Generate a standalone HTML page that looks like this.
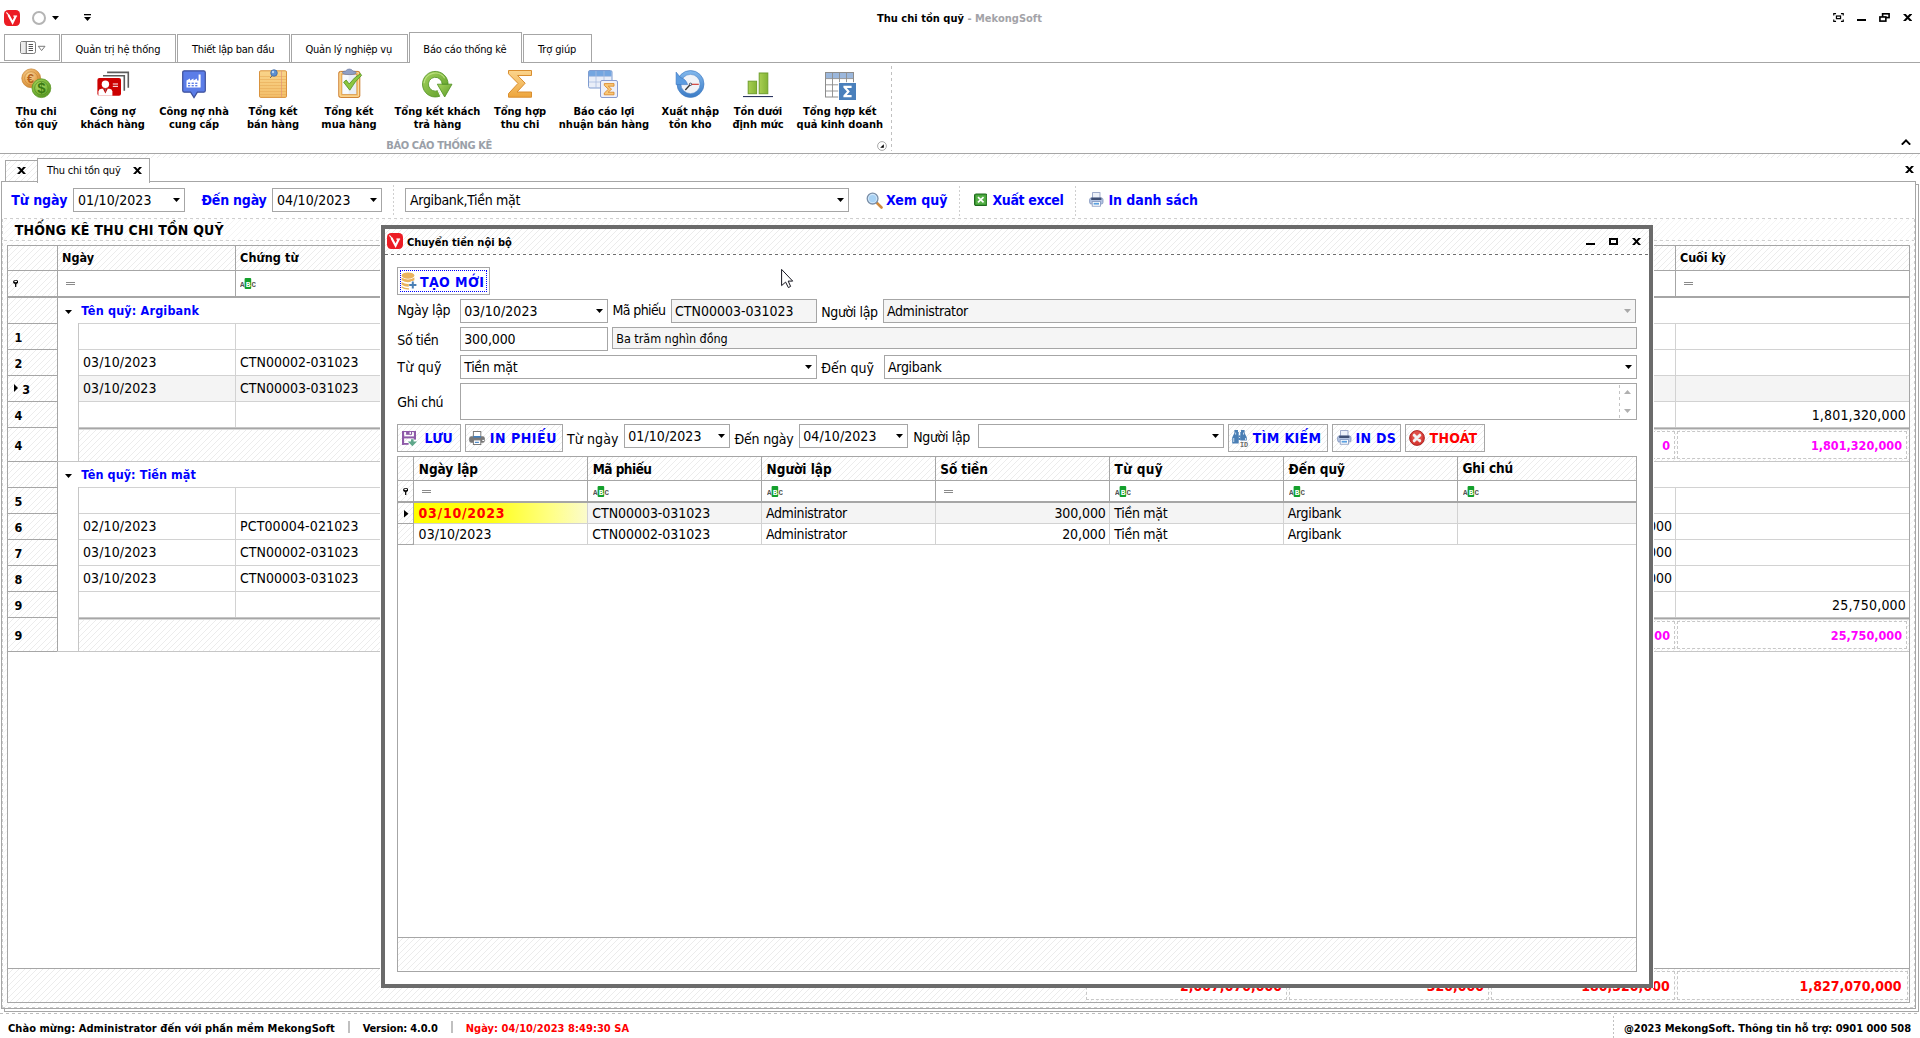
<!DOCTYPE html>
<html lang="vi"><head><meta charset="utf-8"><title>Thu chi tồn quỹ - MekongSoft</title>
<style>
html,body{margin:0;padding:0;background:#fff}
#r{position:relative;width:1920px;height:1038px;overflow:hidden;background:#fff;font-family:"DejaVu Sans Condensed","Liberation Sans",sans-serif}
#r div,#r svg,#r span{position:absolute;box-sizing:content-box}
#r span.t{white-space:nowrap}
#r span.t span{position:static}
.h{background:repeating-linear-gradient(135deg,#fff 0,#fff 3.45px,#ececec 3.45px,#ececec 4.2426px)}
.h3{background:repeating-linear-gradient(135deg,#fff 0,#fff 1.5px,#e2e2e2 1.5px,#e2e2e2 2.1213px)}
.h2{background:repeating-linear-gradient(135deg,#fff 0,#fff 3.45px,#f4f4f4 3.45px,#f4f4f4 4.2426px)}
</style></head><body><div id="r">
<svg style="left:4px;top:10px" width="16" height="16" viewBox="0 0 16 16"><rect x="0" y="0" width="16" height="16" rx="4.2" fill="#ec1c24"/><path d="M4.5 4.9L8.6 12.6L11.7 6.2" fill="none" stroke="#fff" stroke-width="2.1" stroke-linejoin="miter"/><path d="M9.4 6.1H13.1" stroke="#fff" stroke-width="1.3"/><path d="M2.4 2.3L5.2 5.6" stroke="#fff" stroke-width="1.1"/></svg>
<div style="left:32px;top:11px;width:10px;height:10px;border:2px solid #b4b4b4;border-radius:50%"></div>
<svg style="left:52px;top:16px" width="7" height="4"><path d="M0 0H7L3.5 4Z" fill="#000"/></svg>
<svg style="left:84px;top:14px" width="7" height="7"><rect x="0" y="0" width="7" height="1.3" fill="#000"/><path d="M0 3H7L3.5 7Z" fill="#000"/></svg>
<span class="t" style="top:13px;font-size:11px;line-height:11px;color:#000;font-weight:bold;left:877px;letter-spacing:0.02px;">Thu chi tồn quỹ<span style="color:#a3a3a8"> - MekongSoft</span></span>
<svg style="left:1833px;top:13px" width="11" height="9" viewBox="0 0 13 11" fill="none" stroke="#000" stroke-width="1.4"><path d="M0.7 3V0.7H3.5M9.5 0.7H12.3V3M12.3 8V10.3H9.5M3.5 10.3H0.7V8"/><rect x="4" y="3.7" width="5" height="3.2" stroke-width="1.5"/></svg>
<div style="left:1857px;top:19px;width:9px;height:2px;background:#000"></div>
<svg style="left:1879px;top:13px" width="11" height="9" viewBox="0 0 12 10" fill="none" stroke="#000" stroke-width="1.8"><rect x="3.9" y="0.9" width="7.2" height="4.2"/><rect x="0.9" y="4.4" width="6.6" height="4.6" fill="#fff"/></svg>
<svg style="left:1903px;top:14px" width="9.4" height="7" viewBox="0 0 9.4 7"><path d="M0 0H2.8L9.4 7H6.6ZM6.6 0H9.4L2.8 7H0Z" fill="#000"/></svg>
<div style="left:0px;top:62px;width:1920px;height:1px;background:#a6a6a6"></div>
<div style="left:4px;top:34px;width:54px;height:25px;border:1px solid #a6a6a6;background:#fff"></div>
<div style="left:61px;top:34px;width:113px;height:27px;border:1px solid #a6a6a6;border-bottom:none;background:#fff;"></div>
<span class="t" style="top:44px;font-size:11px;line-height:11px;color:#000;left:75.5px;letter-spacing:-0.17px;">Quản trị hệ thống</span>
<div style="left:177px;top:34px;width:111px;height:27px;border:1px solid #a6a6a6;border-bottom:none;background:#fff;"></div>
<span class="t" style="top:44px;font-size:11px;line-height:11px;color:#000;left:192px;letter-spacing:-0.27px;">Thiết lập ban đầu</span>
<div style="left:291px;top:34px;width:115px;height:27px;border:1px solid #a6a6a6;border-bottom:none;background:#fff;"></div>
<span class="t" style="top:44px;font-size:11px;line-height:11px;color:#000;left:305.5px;letter-spacing:-0.24px;">Quản lý nghiệp vụ</span>
<div style="left:409px;top:32px;width:111px;height:30px;border:1px solid #a6a6a6;border-bottom:none;background:#fff;"></div>
<span class="t" style="top:44px;font-size:11px;line-height:11px;color:#000;left:423.3px;letter-spacing:-0.19px;">Báo cáo thống kê</span>
<div style="left:523px;top:34px;width:67px;height:27px;border:1px solid #a6a6a6;border-bottom:none;background:#fff;"></div>
<span class="t" style="top:44px;font-size:11px;line-height:11px;color:#000;left:538px;letter-spacing:-0.13px;">Trợ giúp</span>
<svg style="left:20px;top:41px" width="26" height="13" viewBox="0 0 26 13" fill="none" stroke="#7a7a7a" stroke-width="1"><rect x="0.5" y="0.5" width="15" height="12" rx="1.8"/><rect x="1" y="1" width="5" height="11" fill="#ececec" stroke="none"/><path d="M6.3 0.5V12.5" stroke-width="1.2"/><path d="M8.6 3.5H13M8.6 5.5H13M8.6 7.5H13M8.6 9.5H13" stroke="#555"/><path d="M18.3 5.3H25L21.6 9.6Z"/></svg>
<span class="t" style="top:106px;font-size:11px;line-height:11px;color:#000;font-weight:bold;left:-163.6px;width:400px;text-align:center;">Thu chi</span>
<span class="t" style="top:119px;font-size:11px;line-height:11px;color:#000;font-weight:bold;left:-163.6px;width:400px;text-align:center;">tồn quỹ</span>
<span class="t" style="top:106px;font-size:11px;line-height:11px;color:#000;font-weight:bold;left:-87.3px;width:400px;text-align:center;">Công nợ</span>
<span class="t" style="top:119px;font-size:11px;line-height:11px;color:#000;font-weight:bold;left:-87.3px;width:400px;text-align:center;">khách hàng</span>
<span class="t" style="top:106px;font-size:11px;line-height:11px;color:#000;font-weight:bold;left:-6px;width:400px;text-align:center;">Công nợ nhà</span>
<span class="t" style="top:119px;font-size:11px;line-height:11px;color:#000;font-weight:bold;left:-6px;width:400px;text-align:center;">cung cấp</span>
<span class="t" style="top:106px;font-size:11px;line-height:11px;color:#000;font-weight:bold;left:73px;width:400px;text-align:center;">Tổng kết</span>
<span class="t" style="top:119px;font-size:11px;line-height:11px;color:#000;font-weight:bold;left:73px;width:400px;text-align:center;">bán hàng</span>
<span class="t" style="top:106px;font-size:11px;line-height:11px;color:#000;font-weight:bold;left:149px;width:400px;text-align:center;">Tổng kết</span>
<span class="t" style="top:119px;font-size:11px;line-height:11px;color:#000;font-weight:bold;left:149px;width:400px;text-align:center;">mua hàng</span>
<span class="t" style="top:106px;font-size:11px;line-height:11px;color:#000;font-weight:bold;left:237.5px;width:400px;text-align:center;">Tổng kết khách</span>
<span class="t" style="top:119px;font-size:11px;line-height:11px;color:#000;font-weight:bold;left:237.5px;width:400px;text-align:center;">trả hàng</span>
<span class="t" style="top:106px;font-size:11px;line-height:11px;color:#000;font-weight:bold;left:320px;width:400px;text-align:center;">Tổng hợp</span>
<span class="t" style="top:119px;font-size:11px;line-height:11px;color:#000;font-weight:bold;left:320px;width:400px;text-align:center;">thu chi</span>
<span class="t" style="top:106px;font-size:11px;line-height:11px;color:#000;font-weight:bold;left:404px;width:400px;text-align:center;">Báo cáo lợi</span>
<span class="t" style="top:119px;font-size:11px;line-height:11px;color:#000;font-weight:bold;left:404px;width:400px;text-align:center;">nhuận bán hàng</span>
<span class="t" style="top:106px;font-size:11px;line-height:11px;color:#000;font-weight:bold;left:490.29999999999995px;width:400px;text-align:center;">Xuất nhập</span>
<span class="t" style="top:119px;font-size:11px;line-height:11px;color:#000;font-weight:bold;left:490.29999999999995px;width:400px;text-align:center;">tồn kho</span>
<span class="t" style="top:106px;font-size:11px;line-height:11px;color:#000;font-weight:bold;left:558px;width:400px;text-align:center;">Tồn dưới</span>
<span class="t" style="top:119px;font-size:11px;line-height:11px;color:#000;font-weight:bold;left:558px;width:400px;text-align:center;">định mức</span>
<span class="t" style="top:106px;font-size:11px;line-height:11px;color:#000;font-weight:bold;left:639.8px;width:400px;text-align:center;">Tổng hợp kết</span>
<span class="t" style="top:119px;font-size:11px;line-height:11px;color:#000;font-weight:bold;left:639.8px;width:400px;text-align:center;">quả kinh doanh</span>
<span class="t" style="top:140px;font-size:11px;line-height:11px;color:#9aa0a8;font-weight:bold;left:386.3px;letter-spacing:-0.37px;">BÁO CÁO THỐNG KÊ</span>
<div style="left:891px;top:66px;width:1px;height:85px;background:repeating-linear-gradient(180deg,#c0c0c0 0,#c0c0c0 3px,transparent 3px,transparent 6px)"></div>
<svg style="left:877px;top:141px" width="10" height="10" viewBox="0 0 10 10"><circle cx="5" cy="5" r="4.4" fill="#fff" stroke="#a0a0a0" stroke-width="0.9"/><path d="M6.8 3.2V6.8H3.2Z" fill="#000"/></svg>
<svg style="left:1901px;top:139px" width="10" height="6" viewBox="0 0 10 6" fill="none" stroke="#000" stroke-width="2"><path d="M0.8 5.6L5 1.4L9.2 5.6"/></svg>
<div style="left:0px;top:153px;width:1920px;height:1px;background:#a6a6a6"></div>
<div class="h" style="left:0px;top:154px;width:1920px;height:4px;"></div>
<svg width="0" height="0" style="left:0;top:0"><defs>
<radialGradient id="gGold" cx="0.4" cy="0.35" r="0.7"><stop offset="0" stop-color="#f8d9a0"/><stop offset="0.6" stop-color="#e7a552"/><stop offset="1" stop-color="#c77f2c"/></radialGradient>
<radialGradient id="gGreen" cx="0.4" cy="0.35" r="0.7"><stop offset="0" stop-color="#b4dc6c"/><stop offset="0.6" stop-color="#7cb83a"/><stop offset="1" stop-color="#4f8f1f"/></radialGradient>
<linearGradient id="gNote" x1="0" y1="0" x2="0" y2="1"><stop offset="0" stop-color="#f9d48a"/><stop offset="1" stop-color="#f3bf6a"/></linearGradient>
<linearGradient id="gSig" x1="0" y1="0" x2="0" y2="1"><stop offset="0" stop-color="#fbd58e"/><stop offset="1" stop-color="#eda53c"/></linearGradient>
<linearGradient id="gGrn2" x1="0" y1="0" x2="1" y2="1"><stop offset="0" stop-color="#a6d45c"/><stop offset="1" stop-color="#5a9a28"/></linearGradient>
<linearGradient id="gBlu" x1="0" y1="0" x2="0" y2="1"><stop offset="0" stop-color="#7db4ea"/><stop offset="1" stop-color="#3f7fc8"/></linearGradient>
<linearGradient id="gBar" x1="0" y1="0" x2="1" y2="0"><stop offset="0" stop-color="#a9cf52"/><stop offset="1" stop-color="#84b436"/></linearGradient>
</defs></svg>
<svg style="left:20px;top:68px" width="32" height="32" viewBox="0 0 32 32"><circle cx="11.2" cy="10.3" r="9.4" fill="url(#gGold)" stroke="#c98a3a" stroke-width="0.8"/>
<circle cx="11.2" cy="10.3" r="6.6" fill="none" stroke="#c98a3a" stroke-width="0.7"/>
<text x="10.6" y="14.6" font-size="12.5" font-weight="bold" font-family="Liberation Sans,sans-serif" text-anchor="middle" fill="#b4621a">€</text>
<circle cx="21.4" cy="20.2" r="9.4" fill="url(#gGreen)" stroke="#5f9a2a" stroke-width="0.8"/>
<circle cx="21.4" cy="20.2" r="6.8" fill="none" stroke="#4f8a20" stroke-width="0.7"/>
<text x="21.4" y="25.4" font-size="15" font-weight="bold" font-family="Liberation Sans,sans-serif" text-anchor="middle" fill="#3a7a12">$</text></svg>
<svg style="left:96px;top:68px" width="34" height="32" viewBox="0 0 34 32"><path d="M11.1 4.4H32.3V19.8" fill="none" stroke="#5c5c5c" stroke-width="1.6"/>
<path d="M7 7.7H28.3V22.8" fill="none" stroke="#5c5c5c" stroke-width="1.6"/>
<rect x="1.4" y="10.1" width="23.6" height="17.7" rx="2" fill="#cc0000"/>
<circle cx="9.4" cy="16.3" r="3.7" fill="#fff"/>
<path d="M2.4 27.8V23.4Q2.6 21.2 5.5 20.8H13.3Q16.2 21.2 16.4 23.4V27.8Z" fill="#fff"/>
<path d="M6.9 20.6L9.4 25.4L11.9 20.6" fill="#cc0000"/>
<path d="M8.7 20.4H10.1L9.4 24.6Z" fill="#777"/>
<rect x="16.8" y="15.4" width="5.2" height="1.2" fill="#f6d0d0"/><rect x="16.8" y="17.8" width="5.2" height="1.2" fill="#f6d0d0"/></svg>
<svg style="left:181px;top:69px" width="26" height="31" viewBox="0 0 26 31"><path d="M3.3 1.8H22.7Q24.3 1.8 24.3 3.4V21.6Q24.3 23.2 22.7 23.2H16.4L13 28.6L9.6 23.2H3.3Q1.7 23.2 1.7 21.6V3.4Q1.7 1.8 3.3 1.8Z" fill="#5b7de8" stroke="#3c4f9a" stroke-width="1.2"/>
<path d="M5.5 18.6V11.6L9 9.6V11.6L12.5 9.6V11.6L16 9.6V11.6H17.6V5.6H19.6V18.6Z" fill="#fff"/>
<g fill="#5b7de8"><rect x="7" y="13.6" width="2.2" height="1.4"/><rect x="10.6" y="13.6" width="2.2" height="1.4"/><rect x="14.2" y="13.6" width="2.2" height="1.4"/><rect x="7" y="16" width="2.2" height="1.4"/><rect x="10.6" y="16" width="2.2" height="1.4"/><rect x="14.2" y="16" width="2.2" height="1.4"/></g></svg>
<svg style="left:258px;top:68px" width="31" height="32" viewBox="0 0 31 32"><rect x="1.5" y="2.8" width="27" height="26.6" rx="1.2" fill="url(#gNote)" stroke="#d9933e" stroke-width="1"/>
<g stroke="#e8ab58" stroke-width="0.6"><path d="M2 8.5H28M2 11.5H28M2 14.5H28M2 17.5H28M2 20.5H28M2 23.5H28M2 26.5H28"/></g>
<path d="M23.5 3V29" stroke="#e08d7a" stroke-width="0.6"/>
<path d="M14.5 7.5L12 10" stroke="#6a6a6a" stroke-width="1"/>
<circle cx="16" cy="5" r="3.3" fill="#5d8fd0" stroke="#2f5f9f" stroke-width="0.7"/><circle cx="15" cy="4" r="1.2" fill="#b8d4f2"/></svg>
<svg style="left:336.7px;top:68px" width="27" height="32" viewBox="0 0 27 32"><rect x="1.8" y="3.4" width="21" height="26" rx="1.6" fill="#f6bd62" stroke="#c9792a" stroke-width="1"/>
<rect x="3" y="4.6" width="18.6" height="23.6" rx="1" fill="none" stroke="#fbe0a8" stroke-width="1"/>
<rect x="5" y="6.2" width="14.8" height="20.2" fill="#e9eef6" stroke="#d08a3a" stroke-width="0.6"/>
<rect x="5.6" y="6.8" width="6" height="19" fill="#fafcff" opacity="0.8"/>
<path d="M5.4 4.6Q5.4 3.2 8.6 3Q10 1 12.3 1T16 3Q19.2 3.2 19.2 4.6Q19.2 6.6 12.3 6.6T5.4 4.6Z" fill="#8f9fc4" stroke="#5f6f9c" stroke-width="0.6"/>
<path d="M6.6 14.2L9.2 12L12.2 16Q17 9.4 23.4 5.6L24.6 7.4Q18 13 12.8 22.2Z" fill="#8cc63f" stroke="#4f8f1f" stroke-width="0.8" stroke-linejoin="round"/></svg>
<svg style="left:421px;top:70px" width="32" height="30" viewBox="0 0 32 30"><path d="M16.3 14.2H31L23.7 27Z" fill="url(#gGrn2)" stroke="#4e8f20" stroke-width="0.8" stroke-linejoin="round"/>
<path d="M27.10 14.20A12.8 12.8 0 1 0 19.51 25.89L17.11 20.50A6.9 6.9 0 1 1 21.20 14.20Z" fill="url(#gGrn2)" stroke="#4e8f20" stroke-width="0.8"/>
<path d="M16.91 20.10L20.11 27.09" stroke="#fff" stroke-width="1.1"/>
<path d="M3.10 13.20A11.200000000000001 11.200000000000001 0 0 1 23.70 8.20" fill="none" stroke="#c5e68c" stroke-width="1.2" opacity="0.8"/></svg>
<svg style="left:506px;top:69px" width="28" height="30" viewBox="0 0 28 30"><path d="M2.5 1.5H25.5V6.5H11.6L19.2 14.2L11 23H25.5V28.2H2.5V24.6L12 14.4L2.5 4.8Z" fill="url(#gSig)" stroke="#d98e30" stroke-width="1" stroke-linejoin="round"/></svg>
<svg style="left:587px;top:69px" width="32" height="30" viewBox="0 0 32 30"><rect x="1.5" y="1.5" width="23.5" height="17.5" rx="1.5" fill="#e9eef8" stroke="#7f9cd0" stroke-width="1"/>
<rect x="2" y="2" width="22.5" height="5.2" fill="#74a6e0"/>
<g stroke="#a9bde0" stroke-width="0.8"><path d="M9 2V19M17 2V19M2 7.4H25M2 13H25"/></g>
<rect x="13.5" y="11.5" width="17" height="17" rx="1.5" fill="#eef0fa" stroke="#8a9cd0" stroke-width="1"/>
<path d="M17.3 14.6H27V17.2H21.3L24.6 20.2L21.2 23.2H27V25.8H17.3V24L21.4 20.2L17.3 16.4Z" fill="#f9c878" stroke="#d98220" stroke-width="0.8" stroke-linejoin="round"/></svg>
<svg style="left:675px;top:70px" width="30" height="30" viewBox="0 0 30 30"><circle cx="15.5" cy="14" r="11.6" fill="#f0f3f8" stroke="url(#gBlu)" stroke-width="3.8"/>
<circle cx="15.5" cy="14" r="13.5" fill="none" stroke="#3a76c0" stroke-width="0.6"/>
<circle cx="15.5" cy="14" r="9.6" fill="none" stroke="#3a76c0" stroke-width="0.5"/>
<path d="M1.1 2.1V14.6H12.6Q11 9 5.5 7.5Z" fill="#5c9ce0" stroke="#3a76c0" stroke-width="0.6" stroke-linejoin="round"/>
<path d="M15.5 14.3H23.8" stroke="#d03028" stroke-width="1.1"/>
<path d="M15.5 14.3L10.3 20" stroke="#333" stroke-width="1.3"/>
<circle cx="15.5" cy="14.3" r="1.2" fill="#dfe9f5" stroke="#223" stroke-width="0.7"/></svg>
<svg style="left:742px;top:69px" width="32" height="30" viewBox="0 0 32 30"><rect x="6.2" y="12.2" width="8.4" height="12.5" fill="url(#gBar)" stroke="#6f9e2c" stroke-width="1"/>
<rect x="17.2" y="4" width="8.6" height="20.7" fill="url(#gBar)" stroke="#6f9e2c" stroke-width="1"/>
<rect x="1" y="27" width="30" height="1.1" fill="#2c3560"/></svg>
<svg style="left:824px;top:69px" width="33" height="32" viewBox="0 0 33 32"><rect x="1.5" y="3.5" width="28" height="24.5" fill="#fff" stroke="#8c8c8c" stroke-width="1"/>
<rect x="2" y="4" width="27" height="5.4" fill="#9bb7dc"/>
<g stroke="#8c8c8c" stroke-width="0.9"><path d="M8.5 3.5V28M15.5 3.5V28M22.5 3.5V28M1.5 9.6H29.5M1.5 15.8H29.5M1.5 22H29.5"/></g>
<rect x="14.2" y="13.2" width="18.6" height="18.6" fill="#fff"/><rect x="15" y="14" width="17" height="17" fill="#4a80bc"/>
<path d="M19.4 16.8H27.6V19H22.8L25.8 22.5L22.8 26H27.6V28.2H19.4V26.6L23 22.5L19.4 18.4Z" fill="#fff"/></svg>
<div style="left:4px;top:184px;width:1913px;height:826px;border:1px solid #a6a6a6;background:#fff"></div>
<div style="left:1px;top:181px;width:1913px;height:826px;border:1px solid #a6a6a6;background:#fff"></div>
<div class="h" style="left:5px;top:160px;width:31px;height:20px;border:1px solid #a6a6a6;border-bottom:none"></div>
<div style="left:37px;top:158px;width:111px;height:24px;border:1px solid #a6a6a6;border-bottom:none;background:#fff"></div>
<svg style="left:17px;top:167px" width="9" height="7" viewBox="0 0 9 7"><path d="M0 0H2.7L9 7H6.3ZM6.3 0H9L2.7 7H0Z" fill="#000"/></svg>
<svg style="left:133px;top:167px" width="9" height="7" viewBox="0 0 9 7"><path d="M0 0H2.7L9 7H6.3ZM6.3 0H9L2.7 7H0Z" fill="#000"/></svg>
<svg style="left:1905px;top:166px" width="9" height="7" viewBox="0 0 9 7"><path d="M0 0H2.7L9 7H6.3ZM6.3 0H9L2.7 7H0Z" fill="#000"/></svg>
<span class="t" style="top:165px;font-size:11px;line-height:11px;color:#000;left:47px;letter-spacing:-0.24px;">Thu chi tồn quỹ</span>
<div class="h2" style="left:2px;top:219px;width:1913px;height:788px;"></div>
<div style="left:2px;top:219px;width:1px;height:789px;background:repeating-linear-gradient(180deg,#cfcfcf 0,#cfcfcf 3px,transparent 3px,transparent 6px)"></div>
<div style="left:4px;top:218px;width:1910px;height:1px;background:repeating-linear-gradient(90deg,#cfcfcf 0,#cfcfcf 3px,transparent 3px,transparent 6px)"></div>
<div style="left:4px;top:240px;width:1910px;height:1px;background:repeating-linear-gradient(90deg,#cfcfcf 0,#cfcfcf 3px,transparent 3px,transparent 6px)"></div>
<div style="left:1914px;top:219px;width:1px;height:788px;background:repeating-linear-gradient(180deg,#cfcfcf 0,#cfcfcf 3px,transparent 3px,transparent 6px)"></div>
<div style="left:2px;top:1007px;width:1912px;height:1px;background:repeating-linear-gradient(90deg,#cfcfcf 0,#cfcfcf 3px,transparent 3px,transparent 6px)"></div>
<span class="t" style="top:193px;font-size:14px;line-height:14px;color:#0000ff;font-weight:bold;left:11.2px;letter-spacing:0.00px;">Từ ngày</span>
<div style="left:73px;top:188px;width:110px;height:22px;border:1px solid #a6a6a6;background:#fff"></div>
<span class="t" style="top:193px;font-size:14px;line-height:14px;color:#000;left:78px;letter-spacing:0.10px;">01/10/2023</span>
<svg style="left:173px;top:198.0px" width="7" height="4"><path d="M0 0H7L3.5 4Z" fill="#000"/></svg>
<span class="t" style="top:193px;font-size:14px;line-height:14px;color:#0000ff;font-weight:bold;left:201.5px;letter-spacing:-0.21px;">Đến ngày</span>
<div style="left:272px;top:188px;width:108px;height:22px;border:1px solid #a6a6a6;background:#fff"></div>
<span class="t" style="top:193px;font-size:14px;line-height:14px;color:#000;left:277px;letter-spacing:0.10px;">04/10/2023</span>
<svg style="left:370px;top:198.0px" width="7" height="4"><path d="M0 0H7L3.5 4Z" fill="#000"/></svg>
<div style="left:393px;top:185px;width:1px;height:30px;background:repeating-linear-gradient(180deg,#cfcfcf 0,#cfcfcf 2px,transparent 2px,transparent 4px)"></div>
<div style="left:405px;top:188px;width:442px;height:22px;border:1px solid #a6a6a6;background:#fff"></div>
<span class="t" style="top:193px;font-size:14px;line-height:14px;color:#000;left:410px;letter-spacing:-0.32px;">Argibank,Tiền mặt</span>
<svg style="left:837px;top:198.0px" width="7" height="4"><path d="M0 0H7L3.5 4Z" fill="#000"/></svg>
<svg style="left:866px;top:192px" width="17" height="17" viewBox="0 0 17 17"><path d="M10 10L15.5 15.5" stroke="#d08a3c" stroke-width="2.6" stroke-linecap="round"/><circle cx="6.6" cy="6.6" r="5.4" fill="#cfe6fa" stroke="#7a8fa8" stroke-width="1.3"/><circle cx="6.6" cy="6.6" r="3.6" fill="#a8d2f4"/></svg>
<span class="t" style="top:193px;font-size:14px;line-height:14px;color:#0000ff;font-weight:bold;left:886px;letter-spacing:-0.01px;">Xem quỹ</span>
<div style="left:959px;top:186px;width:1px;height:30px;background:repeating-linear-gradient(180deg,#cfcfcf 0,#cfcfcf 2px,transparent 2px,transparent 4px)"></div>
<svg style="left:973.5px;top:193px" width="13.5" height="13.5" viewBox="0 0 15 14"><rect x="0.6" y="0.6" width="13.8" height="12.8" rx="1.8" fill="#3f9c35" stroke="#1f6a1c" stroke-width="1.2"/><rect x="2.2" y="2.2" width="10.6" height="9.6" fill="#5fb84e" opacity="0.7"/><path d="M4.4 4.2L10.6 9.8M10.6 4.2L4.4 9.8" stroke="#fff" stroke-width="1.9"/></svg>
<span class="t" style="top:193px;font-size:14px;line-height:14px;color:#0000ff;font-weight:bold;left:992.5px;letter-spacing:-0.36px;">Xuất excel</span>
<div style="left:1075px;top:186px;width:1px;height:30px;background:repeating-linear-gradient(180deg,#cfcfcf 0,#cfcfcf 2px,transparent 2px,transparent 4px)"></div>
<svg style="left:1089px;top:192px" width="15.0" height="15.0" viewBox="0 0 15 15"><rect x="3.6" y="0.6" width="7.4" height="6" fill="#eef2fa" stroke="#8a9ac0" stroke-width="0.8"/><rect x="0.6" y="6" width="13.4" height="6" rx="1.6" fill="#b4c4e2" stroke="#7f93bd" stroke-width="0.8"/><rect x="2.2" y="5.6" width="10.2" height="2.4" fill="#3f4f74"/><rect x="3.2" y="9.6" width="8.2" height="4.6" fill="#fff" stroke="#7f93bd" stroke-width="0.8"/><rect x="4.6" y="10.8" width="5.4" height="1.8" fill="#5aa0e0"/></svg>
<span class="t" style="top:193px;font-size:14px;line-height:14px;color:#0000ff;font-weight:bold;left:1108.5px;letter-spacing:-0.07px;">In danh sách</span>
<span class="t" style="top:223px;font-size:14px;line-height:14px;color:#000;font-weight:bold;left:14.7px;letter-spacing:0.18px;">THỐNG KÊ THU CHI TỒN QUỸ</span>
<div style="left:7px;top:245px;width:1901px;height:756px;border:1px solid #a6a6a6;background:#fff"></div>
<div class="h" style="left:8px;top:246px;width:1901px;height:24px;"></div>
<div class="h" style="left:8px;top:271px;width:49px;height:380px;"></div>
<div style="left:8px;top:270px;width:1901px;height:1px;background:#a6a6a6"></div>
<div style="left:8px;top:296px;width:1901px;height:2px;background:#a6a6a6"></div>
<div style="left:57px;top:246px;width:1px;height:405px;background:#a6a6a6"></div>
<div style="left:235px;top:246px;width:1px;height:50px;background:#a6a6a6"></div>
<div style="left:700px;top:246px;width:1px;height:50px;background:#a6a6a6"></div>
<div style="left:1085px;top:246px;width:1px;height:50px;background:#a6a6a6"></div>
<div style="left:1288px;top:246px;width:1px;height:50px;background:#a6a6a6"></div>
<div style="left:1490px;top:246px;width:1px;height:50px;background:#a6a6a6"></div>
<div style="left:1675px;top:246px;width:1px;height:50px;background:#a6a6a6"></div>
<span class="t" style="top:252px;font-size:12.5px;line-height:12.5px;color:#000;font-weight:bold;left:62px;letter-spacing:0.00px;">Ngày</span>
<span class="t" style="top:252px;font-size:12.5px;line-height:12.5px;color:#000;font-weight:bold;left:240px;letter-spacing:0.14px;">Chứng từ</span>
<span class="t" style="top:252px;font-size:12.5px;line-height:12.5px;color:#000;font-weight:bold;left:1680px;letter-spacing:-0.12px;">Cuối kỳ</span>
<svg style="left:12.8px;top:280px" width="5.4" height="7.2" viewBox="0 0 5.4 7.2"><ellipse cx="2.7" cy="1.9" rx="2.7" ry="1.9" fill="#000"/><ellipse cx="2.7" cy="1.45" rx="1.45" ry="0.7" fill="#fff"/><path d="M1.2 3.2H4.2L3.3 4.4V7.2H2.1V4.4Z" fill="#000"/></svg>
<div style="left:66px;top:282px;width:9px;height:1px;background:#8a8a8a"></div><div style="left:66px;top:284px;width:9px;height:1px;background:#8a8a8a"></div>
<svg style="left:240px;top:278px" width="16" height="11" viewBox="0 0 16 11"><rect x="4.6" y="0" width="6.6" height="11" rx="1" fill="#14a02c"/><text x="0" y="8.6" font-size="7.5" font-weight="bold" font-family="Liberation Mono,monospace" fill="#555">A</text><text x="5.7" y="8.8" font-size="8" font-weight="bold" font-family="Liberation Mono,monospace" fill="#fff">B</text><text x="11.6" y="8.6" font-size="7.5" font-weight="bold" font-family="Liberation Mono,monospace" fill="#555">C</text></svg>
<div style="left:1684px;top:282px;width:9px;height:1px;background:#8a8a8a"></div><div style="left:1684px;top:284px;width:9px;height:1px;background:#8a8a8a"></div>
<div style="left:8px;top:323px;width:49px;height:1px;background:#a6a6a6"></div>
<div style="left:8px;top:349px;width:49px;height:1px;background:#a6a6a6"></div>
<div style="left:8px;top:375px;width:49px;height:1px;background:#a6a6a6"></div>
<div style="left:8px;top:401px;width:49px;height:1px;background:#a6a6a6"></div>
<div style="left:8px;top:427px;width:49px;height:1px;background:#a6a6a6"></div>
<div style="left:8px;top:461px;width:49px;height:1px;background:#a6a6a6"></div>
<div style="left:8px;top:487px;width:49px;height:1px;background:#a6a6a6"></div>
<div style="left:8px;top:513px;width:49px;height:1px;background:#a6a6a6"></div>
<div style="left:8px;top:539px;width:49px;height:1px;background:#a6a6a6"></div>
<div style="left:8px;top:565px;width:49px;height:1px;background:#a6a6a6"></div>
<div style="left:8px;top:591px;width:49px;height:1px;background:#a6a6a6"></div>
<div style="left:8px;top:617px;width:49px;height:1px;background:#a6a6a6"></div>
<div style="left:8px;top:651px;width:49px;height:1px;background:#a6a6a6"></div>
<svg style="left:65px;top:310px" width="7" height="4"><path d="M0 0H7L3.5 4Z" fill="#000"/></svg>
<span class="t" style="top:305px;font-size:12.5px;line-height:12.5px;color:#0000ff;font-weight:bold;left:81.3px;letter-spacing:0.17px;">Tên quỹ: Argibank</span>
<div style="left:78px;top:323px;width:1831px;height:1px;background:#d2d2d2"></div>
<div style="left:78px;top:323px;width:1px;height:138px;background:#c6c6c6"></div>
<div style="left:79px;top:349px;width:1830px;height:1px;background:#d2d2d2"></div>
<div style="left:79px;top:375px;width:1830px;height:1px;background:#d2d2d2"></div>
<div style="left:79px;top:401px;width:1830px;height:1px;background:#d2d2d2"></div>
<div style="left:235px;top:324px;width:1px;height:103px;background:#d2d2d2"></div>
<div style="left:700px;top:324px;width:1px;height:103px;background:#d2d2d2"></div>
<div style="left:1085px;top:324px;width:1px;height:103px;background:#d2d2d2"></div>
<div style="left:1288px;top:324px;width:1px;height:103px;background:#d2d2d2"></div>
<div style="left:1490px;top:324px;width:1px;height:103px;background:#d2d2d2"></div>
<div style="left:1675px;top:324px;width:1px;height:103px;background:#d2d2d2"></div>
<div style="left:79px;top:427px;width:1830px;height:1px;background:#c6c6c6"></div>
<div style="left:79px;top:428px;width:1830px;height:1px;background:#a6a6a6"></div>
<div style="left:79px;top:429px;width:1830px;height:1px;background:#d8d8d8"></div>
<div class="h" style="left:79px;top:430px;width:1830px;height:31px;"></div>
<div style="left:57px;top:461px;width:1852px;height:1px;background:#c6c6c6"></div>
<svg style="left:65px;top:474px" width="7" height="4"><path d="M0 0H7L3.5 4Z" fill="#000"/></svg>
<span class="t" style="top:469px;font-size:12.5px;line-height:12.5px;color:#0000ff;font-weight:bold;left:81.3px;letter-spacing:0.07px;">Tên quỹ: Tiền mặt</span>
<div style="left:78px;top:487px;width:1831px;height:1px;background:#d2d2d2"></div>
<div style="left:78px;top:487px;width:1px;height:164px;background:#c6c6c6"></div>
<div style="left:79px;top:513px;width:1830px;height:1px;background:#d2d2d2"></div>
<div style="left:79px;top:539px;width:1830px;height:1px;background:#d2d2d2"></div>
<div style="left:79px;top:565px;width:1830px;height:1px;background:#d2d2d2"></div>
<div style="left:79px;top:591px;width:1830px;height:1px;background:#d2d2d2"></div>
<div style="left:235px;top:488px;width:1px;height:129px;background:#d2d2d2"></div>
<div style="left:700px;top:488px;width:1px;height:129px;background:#d2d2d2"></div>
<div style="left:1085px;top:488px;width:1px;height:129px;background:#d2d2d2"></div>
<div style="left:1288px;top:488px;width:1px;height:129px;background:#d2d2d2"></div>
<div style="left:1490px;top:488px;width:1px;height:129px;background:#d2d2d2"></div>
<div style="left:1675px;top:488px;width:1px;height:129px;background:#d2d2d2"></div>
<div style="left:79px;top:617px;width:1830px;height:1px;background:#c6c6c6"></div>
<div style="left:79px;top:618px;width:1830px;height:1px;background:#a6a6a6"></div>
<div style="left:79px;top:619px;width:1830px;height:1px;background:#d8d8d8"></div>
<div class="h" style="left:79px;top:620px;width:1830px;height:31px;"></div>
<div style="left:57px;top:651px;width:1852px;height:1px;background:#c6c6c6"></div>
<div style="left:79px;top:376px;width:1830px;height:25px;background:#f4f4f4"></div>
<div style="left:235px;top:376px;width:1px;height:25px;background:#d2d2d2"></div>
<div style="left:700px;top:376px;width:1px;height:25px;background:#d2d2d2"></div>
<div style="left:1085px;top:376px;width:1px;height:25px;background:#d2d2d2"></div>
<div style="left:1288px;top:376px;width:1px;height:25px;background:#d2d2d2"></div>
<div style="left:1490px;top:376px;width:1px;height:25px;background:#d2d2d2"></div>
<div style="left:1675px;top:376px;width:1px;height:25px;background:#d2d2d2"></div>
<span class="t" style="top:332px;font-size:12.5px;line-height:12.5px;color:#000;font-weight:bold;left:14.4px;">1</span>
<span class="t" style="top:358px;font-size:12.5px;line-height:12.5px;color:#000;font-weight:bold;left:14.4px;">2</span>
<span class="t" style="top:384px;font-size:12.5px;line-height:12.5px;color:#000;font-weight:bold;left:22.3px;">3</span>
<span class="t" style="top:410px;font-size:12.5px;line-height:12.5px;color:#000;font-weight:bold;left:14.4px;">4</span>
<span class="t" style="top:440px;font-size:12.5px;line-height:12.5px;color:#000;font-weight:bold;left:14.4px;">4</span>
<span class="t" style="top:496px;font-size:12.5px;line-height:12.5px;color:#000;font-weight:bold;left:14.4px;">5</span>
<span class="t" style="top:522px;font-size:12.5px;line-height:12.5px;color:#000;font-weight:bold;left:14.4px;">6</span>
<span class="t" style="top:548px;font-size:12.5px;line-height:12.5px;color:#000;font-weight:bold;left:14.4px;">7</span>
<span class="t" style="top:574px;font-size:12.5px;line-height:12.5px;color:#000;font-weight:bold;left:14.4px;">8</span>
<span class="t" style="top:600px;font-size:12.5px;line-height:12.5px;color:#000;font-weight:bold;left:14.4px;">9</span>
<span class="t" style="top:630px;font-size:12.5px;line-height:12.5px;color:#000;font-weight:bold;left:14.4px;">9</span>
<svg style="left:14px;top:384px" width="4" height="8"><path d="M0 0L4 4L0 8Z" fill="#000"/></svg>
<span class="t" style="top:355px;font-size:14px;line-height:14px;color:#000;left:83px;letter-spacing:0.10px;">03/10/2023</span>
<span class="t" style="top:355px;font-size:14px;line-height:14px;color:#000;left:240px;letter-spacing:0.00px;">CTN00002-031023</span>
<span class="t" style="top:381px;font-size:14px;line-height:14px;color:#000;left:83px;letter-spacing:0.10px;">03/10/2023</span>
<span class="t" style="top:381px;font-size:14px;line-height:14px;color:#000;left:240px;letter-spacing:0.00px;">CTN00003-031023</span>
<span class="t" style="top:519px;font-size:14px;line-height:14px;color:#000;left:83px;letter-spacing:0.10px;">02/10/2023</span>
<span class="t" style="top:519px;font-size:14px;line-height:14px;color:#000;left:240px;letter-spacing:0.12px;">PCT00004-021023</span>
<span class="t" style="top:519px;font-size:14px;line-height:14px;color:#000;right:248px;">180,000,000</span>
<span class="t" style="top:545px;font-size:14px;line-height:14px;color:#000;left:83px;letter-spacing:0.10px;">03/10/2023</span>
<span class="t" style="top:545px;font-size:14px;line-height:14px;color:#000;left:240px;letter-spacing:0.00px;">CTN00002-031023</span>
<span class="t" style="top:545px;font-size:14px;line-height:14px;color:#000;right:248px;">20,000</span>
<span class="t" style="top:571px;font-size:14px;line-height:14px;color:#000;left:83px;letter-spacing:0.10px;">03/10/2023</span>
<span class="t" style="top:571px;font-size:14px;line-height:14px;color:#000;left:240px;letter-spacing:0.00px;">CTN00003-031023</span>
<span class="t" style="top:571px;font-size:14px;line-height:14px;color:#000;right:248px;">300,000</span>
<span class="t" style="top:408px;font-size:14px;line-height:14px;color:#000;right:14px;letter-spacing:0.17px;">1,801,320,000</span>
<span class="t" style="top:598px;font-size:14px;line-height:14px;color:#000;right:14px;letter-spacing:0.19px;">25,750,000</span>
<div style="left:1088px;top:431px;width:197px;height:26px;border:1px dashed #c8c8c8;background:#fff"></div>
<span class="t" style="top:440px;font-size:12.5px;line-height:12.5px;color:#ff00ff;font-weight:bold;right:638px;">1,801,320,000</span>
<div style="left:1290px;top:431px;width:197px;height:26px;border:1px dashed #c8c8c8;background:#fff"></div>
<span class="t" style="top:440px;font-size:12.5px;line-height:12.5px;color:#ff00ff;font-weight:bold;right:436px;">20,000</span>
<div style="left:1492px;top:431px;width:181px;height:26px;border:1px dashed #c8c8c8;background:#fff"></div>
<span class="t" style="top:440px;font-size:12.5px;line-height:12.5px;color:#ff00ff;font-weight:bold;right:250px;">0</span>
<div style="left:1677px;top:431px;width:228px;height:26px;border:1px dashed #c8c8c8;background:#fff"></div>
<span class="t" style="top:440px;font-size:12.5px;line-height:12.5px;color:#ff00ff;font-weight:bold;right:18px;">1,801,320,000</span>
<div style="left:1088px;top:621px;width:197px;height:26px;border:1px dashed #c8c8c8;background:#fff"></div>
<span class="t" style="top:630px;font-size:12.5px;line-height:12.5px;color:#ff00ff;font-weight:bold;right:638px;">205,750,000</span>
<div style="left:1290px;top:621px;width:197px;height:26px;border:1px dashed #c8c8c8;background:#fff"></div>
<span class="t" style="top:630px;font-size:12.5px;line-height:12.5px;color:#ff00ff;font-weight:bold;right:436px;">300,000</span>
<div style="left:1492px;top:621px;width:181px;height:26px;border:1px dashed #c8c8c8;background:#fff"></div>
<span class="t" style="top:630px;font-size:12.5px;line-height:12.5px;color:#ff00ff;font-weight:bold;right:250px;">180,320,000</span>
<div style="left:1677px;top:621px;width:228px;height:26px;border:1px dashed #c8c8c8;background:#fff"></div>
<span class="t" style="top:630px;font-size:12.5px;line-height:12.5px;color:#ff00ff;font-weight:bold;right:18px;">25,750,000</span>
<div style="left:8px;top:968px;width:1901px;height:1px;background:#a6a6a6"></div>
<div class="h" style="left:8px;top:969px;width:1901px;height:33px;"></div>
<div style="left:1086px;top:971px;width:199px;height:27px;border:1px dashed #c8c8c8;background:#fff"></div>
<span class="t" style="top:979px;font-size:14px;line-height:14px;color:#ff0000;font-weight:bold;right:638px;">2,007,070,000</span>
<div style="left:1289px;top:971px;width:198px;height:27px;border:1px dashed #c8c8c8;background:#fff"></div>
<span class="t" style="top:979px;font-size:14px;line-height:14px;color:#ff0000;font-weight:bold;right:436px;">320,000</span>
<div style="left:1491px;top:971px;width:182px;height:27px;border:1px dashed #c8c8c8;background:#fff"></div>
<span class="t" style="top:979px;font-size:14px;line-height:14px;color:#ff0000;font-weight:bold;right:250.29999999999995px;">180,320,000</span>
<div style="left:1677px;top:971px;width:229px;height:27px;border:1px dashed #c8c8c8;background:#fff"></div>
<span class="t" style="top:979px;font-size:14px;line-height:14px;color:#ff0000;font-weight:bold;right:18.40000000000009px;">1,827,070,000</span>
<div style="left:380px;top:225px;width:1px;height:763px;background:#fff"></div>
<div style="left:1653px;top:225px;width:1px;height:763px;background:#fff"></div>
<div style="left:381px;top:225px;width:1264px;height:755px;border:4px solid #6b6b6b;background:#fff"></div>
<div class="h" style="left:385px;top:229px;width:1264px;height:25px;"></div>
<div style="left:385px;top:254px;width:1264px;height:1px;background:repeating-linear-gradient(90deg,#6e6e6e 0,#6e6e6e 3px,transparent 3px,transparent 6px)"></div>
<svg style="left:387px;top:233px" width="16" height="16" viewBox="0 0 16 16"><rect x="0" y="0" width="16" height="16" rx="4.2" fill="#ec1c24"/><path d="M4.5 4.9L8.6 12.6L11.7 6.2" fill="none" stroke="#fff" stroke-width="2.1" stroke-linejoin="miter"/><path d="M9.4 6.1H13.1" stroke="#fff" stroke-width="1.3"/><path d="M2.4 2.3L5.2 5.6" stroke="#fff" stroke-width="1.1"/></svg>
<span class="t" style="top:237px;font-size:11px;line-height:11px;color:#000;font-weight:bold;left:407px;">Chuyển tiền nội bộ</span>
<div style="left:1586px;top:243px;width:9px;height:2px;background:#000"></div>
<div style="left:1609px;top:238px;width:5px;height:3px;border:2px solid #000;border-top-width:2px"></div>
<svg style="left:1632px;top:238px" width="9" height="7" viewBox="0 0 9 7"><path d="M0 0H2.7L9 7H6.3ZM6.3 0H9L2.7 7H0Z" fill="#000"/></svg>
<div class="h3" style="left:397px;top:267px;width:91px;height:26px;border:1px solid #a6a6a6"></div>
<div style="left:400px;top:270px;width:85px;height:20px;border:1px dotted #0000ff"></div>
<svg style="left:401px;top:272px" width="17" height="18" viewBox="0 0 17 18"><g fill="#e9b35f"><ellipse cx="7" cy="3.6" rx="6.4" ry="3.2"/><path d="M0.6 5.4Q7 9.4 13.4 5.4V8.2Q7 12.2 0.6 8.2Z"/><path d="M0.6 10Q7 14 13.4 10V12.8Q7 16.8 0.6 12.8Z"/><path d="M0.6 14.2Q4 16.4 8 16.2V17.6Q3 17.8 0.6 15.8Z"/></g><path d="M11.8 9V17M7.8 13H15.8" stroke="#fff" stroke-width="4"/><path d="M11.8 9.4V16.6M8.2 13H15.4" stroke="#4a7fb4" stroke-width="2"/></svg>
<span class="t" style="top:275px;font-size:14px;line-height:14px;color:#0000ff;font-weight:bold;left:420px;letter-spacing:0.39px;">TẠO MỚI</span>
<span class="t" style="top:303px;font-size:14px;line-height:14px;color:#000;left:397.3px;letter-spacing:-0.36px;">Ngày lập</span>
<div style="left:460px;top:299px;width:146px;height:22px;border:1px solid #a6a6a6;background:#fff"></div>
<span class="t" style="top:304px;font-size:14px;line-height:14px;color:#000;left:464.2px;letter-spacing:0.08px;">03/10/2023</span>
<svg style="left:596px;top:309.0px" width="7" height="4"><path d="M0 0H7L3.5 4Z" fill="#000"/></svg>
<span class="t" style="top:303px;font-size:14px;line-height:14px;color:#000;left:612.5px;letter-spacing:-0.60px;">Mã phiếu</span>
<div style="left:671px;top:299px;width:144px;height:22px;border:1px solid #a6a6a6;background:#f5f5f5"></div>
<span class="t" style="top:304px;font-size:14px;line-height:14px;color:#000;left:675px;letter-spacing:-0.01px;">CTN00003-031023</span>
<span class="t" style="top:305px;font-size:14px;line-height:14px;color:#000;left:821.3px;letter-spacing:-0.39px;">Người lập</span>
<div style="left:883px;top:299px;width:751px;height:22px;border:1px solid #a6a6a6;background:#f5f5f5"></div>
<span class="t" style="top:304px;font-size:14px;line-height:14px;color:#000;left:887px;letter-spacing:-0.39px;">Administrator</span>
<svg style="left:1624px;top:309.0px" width="7" height="4"><path d="M0 0H7L3.5 4Z" fill="#a8a8a8"/></svg>
<span class="t" style="top:333px;font-size:14px;line-height:14px;color:#000;left:397.3px;letter-spacing:-0.41px;">Số tiền</span>
<div style="left:460px;top:327px;width:146px;height:22px;border:1px solid #a6a6a6;background:#fff"></div>
<span class="t" style="top:332px;font-size:14px;line-height:14px;color:#000;left:464.2px;letter-spacing:-0.11px;">300,000</span>
<div style="left:612px;top:327px;width:1023px;height:20px;border:1px solid #a6a6a6;background:#f5f5f5"></div>
<span class="t" style="top:333px;font-size:12.5px;line-height:12.5px;color:#000;left:616.3px;letter-spacing:-0.04px;">Ba trăm nghìn đồng</span>
<span class="t" style="top:360px;font-size:14px;line-height:14px;color:#000;left:397.3px;letter-spacing:0.22px;">Từ quỹ</span>
<div style="left:460px;top:355px;width:355px;height:22px;border:1px solid #a6a6a6;background:#fff"></div>
<span class="t" style="top:360px;font-size:14px;line-height:14px;color:#000;left:464.2px;letter-spacing:-0.29px;">Tiền mặt</span>
<svg style="left:805px;top:365.0px" width="7" height="4"><path d="M0 0H7L3.5 4Z" fill="#000"/></svg>
<span class="t" style="top:361px;font-size:14px;line-height:14px;color:#000;left:821.3px;letter-spacing:-0.05px;">Đến quỹ</span>
<div style="left:884px;top:355px;width:751px;height:22px;border:1px solid #a6a6a6;background:#fff"></div>
<span class="t" style="top:360px;font-size:14px;line-height:14px;color:#000;left:888px;letter-spacing:-0.33px;">Argibank</span>
<svg style="left:1625px;top:365.0px" width="7" height="4"><path d="M0 0H7L3.5 4Z" fill="#000"/></svg>
<span class="t" style="top:395px;font-size:14px;line-height:14px;color:#000;left:397.3px;letter-spacing:-0.31px;">Ghi chú</span>
<div style="left:460px;top:383px;width:1175px;height:35px;border:1px solid #a6a6a6;background:#fff"></div>
<div style="left:1619px;top:385px;width:1px;height:33px;background:repeating-linear-gradient(180deg,#c4c4c4 0,#c4c4c4 3px,transparent 3px,transparent 6px)"></div>
<svg style="left:1624px;top:390px" width="7" height="4"><path d="M0 4H7L3.5 0Z" fill="#b0b0b0"/></svg>
<svg style="left:1624px;top:409px" width="7" height="4"><path d="M0 0H7L3.5 4Z" fill="#b0b0b0"/></svg>
<div class="h" style="left:397px;top:424px;width:62px;height:26px;border:1px solid #a6a6a6"></div>
<span class="t" style="top:431px;font-size:14px;line-height:14px;color:#0000ff;font-weight:bold;left:424.4px;letter-spacing:-0.19px;">LƯU</span>
<div class="h" style="left:465px;top:424px;width:96px;height:26px;border:1px solid #a6a6a6"></div>
<span class="t" style="top:431px;font-size:14px;line-height:14px;color:#0000ff;font-weight:bold;left:489.8px;letter-spacing:0.54px;">IN PHIẾU</span>
<div class="h" style="left:1228px;top:424px;width:98px;height:26px;border:1px solid #a6a6a6"></div>
<span class="t" style="top:431px;font-size:14px;line-height:14px;color:#0000ff;font-weight:bold;left:1252.8px;letter-spacing:0.35px;">TÌM KIẾM</span>
<div class="h" style="left:1332px;top:424px;width:67px;height:26px;border:1px solid #a6a6a6"></div>
<span class="t" style="top:431px;font-size:14px;line-height:14px;color:#0000ff;font-weight:bold;left:1355.6px;letter-spacing:0.25px;">IN DS</span>
<div class="h" style="left:1405px;top:424px;width:78px;height:26px;border:1px solid #a6a6a6"></div>
<span class="t" style="top:431px;font-size:14px;line-height:14px;color:#ff0000;font-weight:bold;left:1429.6px;letter-spacing:0.22px;">THOÁT</span>
<svg style="left:402px;top:431px" width="16" height="16" viewBox="0 0 16 16"><g fill="#8e5aa8"><rect x="0" y="0" width="2.1" height="13.8"/><rect x="0" y="0" width="14" height="1.1"/><rect x="4.1" y="0" width="5.9" height="3.8"/><rect x="11.9" y="0" width="2.1" height="8.6"/><rect x="1" y="5.4" width="12" height="2"/><rect x="0" y="12" width="6.6" height="1.8"/></g><rect x="7.6" y="0.9" width="1.3" height="2.1" fill="#fff"/><path d="M9 8.2H11.6V10.6H15L10.4 15.2L5.8 10.6H9Z" fill="#5fa78a"/></svg>
<svg style="left:469px;top:431px" width="16" height="14" viewBox="0 0 16 14"><rect x="4.4" y="0.5" width="7.4" height="5.6" fill="#fff" stroke="#7a7a7a" stroke-width="1"/><rect x="0.2" y="5.2" width="15.6" height="6.6" rx="2" fill="#787878"/><rect x="4.4" y="5" width="7.4" height="1.6" fill="#3f7fc0"/><rect x="4.4" y="8.9" width="7.4" height="4.6" fill="#fff" stroke="#787878" stroke-width="1"/><rect x="5.9" y="10.8" width="4" height="1.1" fill="#3f7fc0"/><rect x="13.3" y="8.9" width="1.8" height="1.1" fill="#fff"/></svg>
<svg style="left:1232px;top:430px" width="17" height="17" viewBox="0 0 17 17"><g fill="#4a7fb5"><path d="M2.4 0H6V2H6.7V13.5H0.2V7.5L2.4 3Z"/><path d="M9 0H12.6V3L14.8 7.5V10.6H8.3V2H9Z"/><rect x="6.4" y="5.4" width="2.2" height="4.6"/></g><g fill="#d4e3f3"><rect x="3.2" y="2.6" width="0.9" height="2"/><rect x="1.3" y="8" width="0.9" height="4"/><rect x="11" y="2.6" width="0.9" height="2"/><rect x="13" y="8" width="0.9" height="2"/><rect x="7" y="7" width="1" height="1"/></g><text x="8" y="16.6" font-size="6.8" font-weight="bold" font-family="Liberation Mono,monospace" fill="#6a6a6a">ID</text></svg>
<svg style="left:1337px;top:430px" width="15.0" height="15.0" viewBox="0 0 15 15"><rect x="3.6" y="0.6" width="7.4" height="6" fill="#eef2fa" stroke="#8a9ac0" stroke-width="0.8"/><rect x="0.6" y="6" width="13.4" height="6" rx="1.6" fill="#b4c4e2" stroke="#7f93bd" stroke-width="0.8"/><rect x="2.2" y="5.6" width="10.2" height="2.4" fill="#3f4f74"/><rect x="3.2" y="9.6" width="8.2" height="4.6" fill="#fff" stroke="#7f93bd" stroke-width="0.8"/><rect x="4.6" y="10.8" width="5.4" height="1.8" fill="#5aa0e0"/></svg>
<svg style="left:1409px;top:430px" width="16" height="16" viewBox="0 0 16 16"><circle cx="8" cy="8" r="7.4" fill="#d63a34" stroke="#a81c18" stroke-width="0.9"/><circle cx="8" cy="6.4" r="5.4" fill="#e8605a" opacity="0.55"/><path d="M5.2 5.2L10.8 10.8M10.8 5.2L5.2 10.8" stroke="#f2f2f2" stroke-width="3" stroke-linecap="round"/></svg>
<span class="t" style="top:432px;font-size:14px;line-height:14px;color:#000;left:567px;letter-spacing:0.11px;">Từ ngày</span>
<div style="left:624px;top:424px;width:104px;height:22px;border:1px solid #a6a6a6;background:#fff"></div>
<span class="t" style="top:429px;font-size:14px;line-height:14px;color:#000;left:628.3px;letter-spacing:0.06px;">01/10/2023</span>
<svg style="left:718px;top:434.0px" width="7" height="4"><path d="M0 0H7L3.5 4Z" fill="#000"/></svg>
<span class="t" style="top:432px;font-size:14px;line-height:14px;color:#000;left:734.4px;letter-spacing:-0.19px;">Đến ngày</span>
<div style="left:799px;top:424px;width:107px;height:22px;border:1px solid #a6a6a6;background:#fff"></div>
<span class="t" style="top:429px;font-size:14px;line-height:14px;color:#000;left:803.3px;letter-spacing:0.06px;">04/10/2023</span>
<svg style="left:896px;top:434.0px" width="7" height="4"><path d="M0 0H7L3.5 4Z" fill="#000"/></svg>
<span class="t" style="top:430px;font-size:14px;line-height:14px;color:#000;left:913.3px;letter-spacing:-0.36px;">Người lập</span>
<div style="left:978px;top:424px;width:244px;height:22px;border:1px solid #a6a6a6;background:#fff"></div>
<svg style="left:1212px;top:434.0px" width="7" height="4"><path d="M0 0H7L3.5 4Z" fill="#000"/></svg>
<div style="left:397px;top:456px;width:1238px;height:514px;border:1px solid #a6a6a6;background:#fff"></div>
<div class="h" style="left:398px;top:457px;width:1238px;height:23px;"></div>
<div class="h" style="left:398px;top:481px;width:15px;height:63px;"></div>
<div style="left:398px;top:480px;width:1238px;height:1px;background:#a6a6a6"></div>
<div style="left:398px;top:501px;width:1238px;height:2px;background:#a6a6a6"></div>
<div style="left:413px;top:457px;width:1px;height:45px;background:#a6a6a6"></div>
<div style="left:587px;top:457px;width:1px;height:45px;background:#a6a6a6"></div>
<div style="left:761px;top:457px;width:1px;height:45px;background:#a6a6a6"></div>
<div style="left:935px;top:457px;width:1px;height:45px;background:#a6a6a6"></div>
<div style="left:1109px;top:457px;width:1px;height:45px;background:#a6a6a6"></div>
<div style="left:1283px;top:457px;width:1px;height:45px;background:#a6a6a6"></div>
<div style="left:1457px;top:457px;width:1px;height:45px;background:#a6a6a6"></div>
<div style="left:414px;top:503px;width:1222px;height:20px;background:#f4f4f4"></div>
<div style="left:414px;top:503px;width:173px;height:20px;background:linear-gradient(90deg,#ffff00 0%,#ffff18 45%,#ffff88 80%,#fbfbcc 100%)"></div>
<div style="left:398px;top:523px;width:1238px;height:1px;background:#d2d2d2"></div>
<div style="left:398px;top:544px;width:1238px;height:1px;background:#d2d2d2"></div>
<div style="left:398px;top:523px;width:15px;height:1px;background:#a6a6a6"></div>
<div style="left:398px;top:544px;width:15px;height:1px;background:#a6a6a6"></div>
<div style="left:413px;top:503px;width:1px;height:42px;background:#a6a6a6"></div>
<div style="left:587px;top:503px;width:1px;height:42px;background:#d2d2d2"></div>
<div style="left:761px;top:503px;width:1px;height:42px;background:#d2d2d2"></div>
<div style="left:935px;top:503px;width:1px;height:42px;background:#d2d2d2"></div>
<div style="left:1109px;top:503px;width:1px;height:42px;background:#d2d2d2"></div>
<div style="left:1283px;top:503px;width:1px;height:42px;background:#d2d2d2"></div>
<div style="left:1457px;top:503px;width:1px;height:42px;background:#d2d2d2"></div>
<span class="t" style="top:463px;font-size:13.5px;line-height:13.5px;color:#000;font-weight:bold;left:418.8px;letter-spacing:-0.08px;">Ngày lập</span>
<span class="t" style="top:463px;font-size:13.5px;line-height:13.5px;color:#000;font-weight:bold;left:592.7px;letter-spacing:-0.51px;">Mã phiếu</span>
<span class="t" style="top:463px;font-size:13.5px;line-height:13.5px;color:#000;font-weight:bold;left:766.6px;letter-spacing:-0.02px;">Người lập</span>
<span class="t" style="top:463px;font-size:13.5px;line-height:13.5px;color:#000;font-weight:bold;left:940.3px;letter-spacing:-0.11px;">Số tiền</span>
<span class="t" style="top:463px;font-size:13.5px;line-height:13.5px;color:#000;font-weight:bold;left:1114.5px;letter-spacing:0.35px;">Từ quỹ</span>
<span class="t" style="top:463px;font-size:13.5px;line-height:13.5px;color:#000;font-weight:bold;left:1288.5px;letter-spacing:-0.01px;">Đến quỹ</span>
<span class="t" style="top:462px;font-size:13.5px;line-height:13.5px;color:#000;font-weight:bold;left:1462.5px;letter-spacing:-0.14px;">Ghi chú</span>
<svg style="left:402.8px;top:488px" width="5.4" height="7.2" viewBox="0 0 5.4 7.2"><ellipse cx="2.7" cy="1.9" rx="2.7" ry="1.9" fill="#000"/><ellipse cx="2.7" cy="1.45" rx="1.45" ry="0.7" fill="#fff"/><path d="M1.2 3.2H4.2L3.3 4.4V7.2H2.1V4.4Z" fill="#000"/></svg>
<div style="left:422px;top:490px;width:9px;height:1px;background:#8a8a8a"></div><div style="left:422px;top:492px;width:9px;height:1px;background:#8a8a8a"></div>
<div style="left:943.5px;top:490px;width:9px;height:1px;background:#8a8a8a"></div><div style="left:943.5px;top:492px;width:9px;height:1px;background:#8a8a8a"></div>
<svg style="left:593px;top:486px" width="16" height="11" viewBox="0 0 16 11"><rect x="4.6" y="0" width="6.6" height="11" rx="1" fill="#14a02c"/><text x="0" y="8.6" font-size="7.5" font-weight="bold" font-family="Liberation Mono,monospace" fill="#555">A</text><text x="5.7" y="8.8" font-size="8" font-weight="bold" font-family="Liberation Mono,monospace" fill="#fff">B</text><text x="11.6" y="8.6" font-size="7.5" font-weight="bold" font-family="Liberation Mono,monospace" fill="#555">C</text></svg>
<svg style="left:767px;top:486px" width="16" height="11" viewBox="0 0 16 11"><rect x="4.6" y="0" width="6.6" height="11" rx="1" fill="#14a02c"/><text x="0" y="8.6" font-size="7.5" font-weight="bold" font-family="Liberation Mono,monospace" fill="#555">A</text><text x="5.7" y="8.8" font-size="8" font-weight="bold" font-family="Liberation Mono,monospace" fill="#fff">B</text><text x="11.6" y="8.6" font-size="7.5" font-weight="bold" font-family="Liberation Mono,monospace" fill="#555">C</text></svg>
<svg style="left:1114.5px;top:486px" width="16" height="11" viewBox="0 0 16 11"><rect x="4.6" y="0" width="6.6" height="11" rx="1" fill="#14a02c"/><text x="0" y="8.6" font-size="7.5" font-weight="bold" font-family="Liberation Mono,monospace" fill="#555">A</text><text x="5.7" y="8.8" font-size="8" font-weight="bold" font-family="Liberation Mono,monospace" fill="#fff">B</text><text x="11.6" y="8.6" font-size="7.5" font-weight="bold" font-family="Liberation Mono,monospace" fill="#555">C</text></svg>
<svg style="left:1288.5px;top:486px" width="16" height="11" viewBox="0 0 16 11"><rect x="4.6" y="0" width="6.6" height="11" rx="1" fill="#14a02c"/><text x="0" y="8.6" font-size="7.5" font-weight="bold" font-family="Liberation Mono,monospace" fill="#555">A</text><text x="5.7" y="8.8" font-size="8" font-weight="bold" font-family="Liberation Mono,monospace" fill="#fff">B</text><text x="11.6" y="8.6" font-size="7.5" font-weight="bold" font-family="Liberation Mono,monospace" fill="#555">C</text></svg>
<svg style="left:1462.5px;top:486px" width="16" height="11" viewBox="0 0 16 11"><rect x="4.6" y="0" width="6.6" height="11" rx="1" fill="#14a02c"/><text x="0" y="8.6" font-size="7.5" font-weight="bold" font-family="Liberation Mono,monospace" fill="#555">A</text><text x="5.7" y="8.8" font-size="8" font-weight="bold" font-family="Liberation Mono,monospace" fill="#fff">B</text><text x="11.6" y="8.6" font-size="7.5" font-weight="bold" font-family="Liberation Mono,monospace" fill="#555">C</text></svg>
<svg style="left:404px;top:510px" width="4.5" height="7.6" viewBox="0 0 4.5 7.6"><path d="M0 0L4.5 3.8L0 7.6Z" fill="#000"/></svg>
<span class="t" style="top:506px;font-size:14px;line-height:14px;color:#ff0000;font-weight:bold;left:418.6px;letter-spacing:0.73px;">03/10/2023</span>
<span class="t" style="top:506px;font-size:14px;line-height:14px;color:#000;left:592.3px;letter-spacing:-0.05px;">CTN00003-031023</span>
<span class="t" style="top:506px;font-size:14px;line-height:14px;color:#000;left:766px;letter-spacing:-0.39px;">Administrator</span>
<span class="t" style="top:506px;font-size:14px;line-height:14px;color:#000;right:814.3px;letter-spacing:-0.11px;">300,000</span>
<span class="t" style="top:506px;font-size:14px;line-height:14px;color:#000;left:1114.3px;letter-spacing:-0.29px;">Tiền mặt</span>
<span class="t" style="top:506px;font-size:14px;line-height:14px;color:#000;left:1287.7px;letter-spacing:-0.33px;">Argibank</span>
<span class="t" style="top:527px;font-size:14px;line-height:14px;color:#000;left:418.6px;letter-spacing:0.03px;">03/10/2023</span>
<span class="t" style="top:527px;font-size:14px;line-height:14px;color:#000;left:592.3px;letter-spacing:-0.05px;">CTN00002-031023</span>
<span class="t" style="top:527px;font-size:14px;line-height:14px;color:#000;left:766px;letter-spacing:-0.39px;">Administrator</span>
<span class="t" style="top:527px;font-size:14px;line-height:14px;color:#000;right:814.3px;letter-spacing:-0.09px;">20,000</span>
<span class="t" style="top:527px;font-size:14px;line-height:14px;color:#000;left:1114.3px;letter-spacing:-0.29px;">Tiền mặt</span>
<span class="t" style="top:527px;font-size:14px;line-height:14px;color:#000;left:1287.7px;letter-spacing:-0.33px;">Argibank</span>
<div style="left:398px;top:937px;width:1238px;height:1px;background:#a6a6a6"></div>
<div class="h" style="left:398px;top:938px;width:1238px;height:32px;"></div>
<svg style="left:781px;top:268px" width="13" height="21" viewBox="0 0 13 21"><path d="M0.6 1.4V17.6L4.6 14.1L7.4 19.6L9.6 18.4L7.2 13.1H11.7Z" fill="#fff" stroke="#14141e" stroke-width="1" stroke-linejoin="round"/></svg>
<div style="left:0px;top:1012px;width:1920px;height:26px;background:#fff"></div>
<div style="left:0px;top:1013px;width:1920px;height:1px;background:repeating-linear-gradient(90deg,#bdbdbd 0,#bdbdbd 3px,transparent 3px,transparent 6px)"></div>
<span class="t" style="top:1023px;font-size:11px;line-height:11px;color:#000;font-weight:bold;left:8px;letter-spacing:0.05px;">Chào mừng: Administrator đến với phần mềm MekongSoft</span>
<div style="left:348px;top:1021px;width:2px;height:12px;background:#c0c0c0"></div>
<span class="t" style="top:1023px;font-size:11px;line-height:11px;color:#000;font-weight:bold;left:362.7px;letter-spacing:-0.17px;">Version: 4.0.0</span>
<div style="left:451px;top:1021px;width:2px;height:12px;background:#c0c0c0"></div>
<span class="t" style="top:1023px;font-size:11px;line-height:11px;color:#ff0000;font-weight:bold;left:465.7px;letter-spacing:0.06px;">Ngày: 04/10/2023 8:49:30 SA</span>
<div style="left:1613px;top:1016px;width:1px;height:22px;background:repeating-linear-gradient(180deg,#c0c0c0 0,#c0c0c0 2px,transparent 2px,transparent 4px)"></div>
<span class="t" style="top:1023px;font-size:11px;line-height:11px;color:#000;font-weight:bold;left:1624px;letter-spacing:-0.03px;">@2023 MekongSoft. Thông tin hỗ trợ: 0901 000 508</span>
</div></body></html>
